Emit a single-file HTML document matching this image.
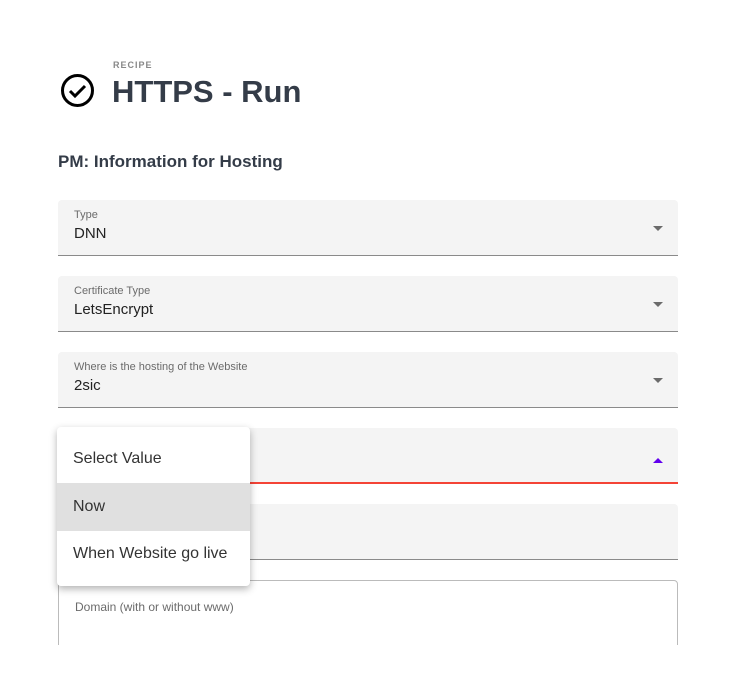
<!DOCTYPE html>
<html><head><style>
body{margin:0;width:740px;height:690px;background:#fff;font-family:"Liberation Sans",sans-serif;position:relative;overflow:hidden}
.f{position:absolute;left:58px;width:620px;height:55px;background:#f4f4f4;border-bottom:1px solid #8a8a8a;border-radius:4px 4px 0 0}
.l{position:absolute;left:16px;top:9px;font-size:11px;color:#6b6b6b}
.v{position:absolute;left:16px;top:25px;font-size:15px;color:#222}
.a{position:absolute;right:15px;top:26px;width:0;height:0;border-left:5px solid transparent;border-right:5px solid transparent;border-top:5px solid #6b6b6b}
.m{position:absolute;left:57px;top:427px;width:193px;height:159px;background:#fff;border-radius:4px;box-shadow:0 3px 8px rgba(0,0,0,.3);overflow:hidden}
.o{height:48px;line-height:64px;padding-left:16px;font-size:16px;color:#333}
</style></head><body>
<svg style="position:absolute;left:60px;top:73px" width="35" height="35" viewBox="0 0 35 35"><circle cx="17.5" cy="17.5" r="15" fill="none" stroke="#000" stroke-width="3"/><path d="M10 18l5 5 10-10" fill="none" stroke="#000" stroke-width="3"/></svg>
<div style="position:absolute;left:113px;top:60px;font-size:9px;font-weight:bold;color:#888;letter-spacing:1px">RECIPE</div>
<div style="position:absolute;left:112px;top:74px;font-size:31px;font-weight:bold;color:#343c48">HTTPS - Run</div>
<div style="position:absolute;left:58px;top:152px;font-size:17px;font-weight:bold;color:#343c48">PM: Information for Hosting</div>
<div class="f" style="top:200px"><div class="l">Type</div><div class="v">DNN</div><div class="a"></div></div>
<div class="f" style="top:276px"><div class="l">Certificate Type</div><div class="v">LetsEncrypt</div><div class="a"></div></div>
<div class="f" style="top:352px"><div class="l">Where is the hosting of the Website</div><div class="v">2sic</div><div class="a"></div></div>
<div class="f" style="top:428px;height:54px;border-bottom:2px solid #f44336"><div class="a" style="top:30px;border-top:0;border-bottom:5px solid #6200ee"></div></div>
<div class="f" style="top:504px"></div>
<div style="position:absolute;left:58px;top:580px;width:618px;height:80px;border:1px solid #bbb;border-radius:4px"><div class="l" style="top:19px;font-size:12px">Domain (with or without www)</div></div>
<div style="position:absolute;left:0;top:645px;width:740px;height:45px;background:#fff"></div>
<div class="m"><div class="o" style="height:56px;line-height:64px">Select Value</div><div class="o" style="background:#e0e0e0;line-height:48px">Now</div><div class="o" style="line-height:46px">When Website go live</div></div>
</body></html>
